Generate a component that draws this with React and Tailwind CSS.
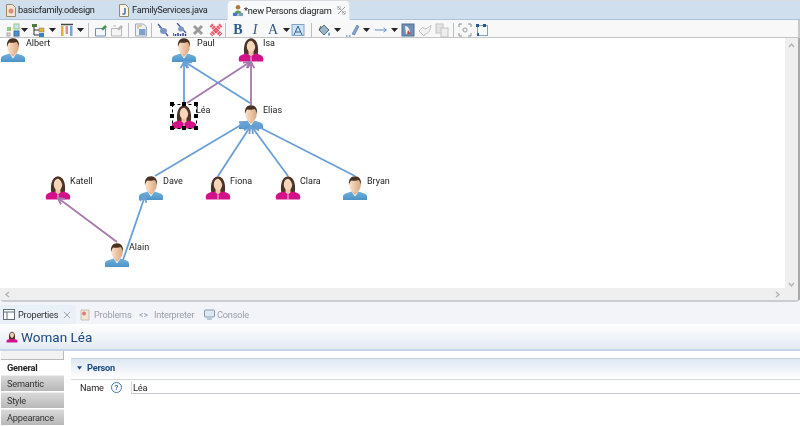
import React from "react";

const font = { fontFamily: 'Roboto,"Noto Sans",sans-serif' };

function Man() {
  return (
    <svg width="26" height="24" viewBox="0 0 26 24" className="block">
      <defs>
        <linearGradient id="skin" x1="0" y1="0" x2="1" y2="0">
          <stop offset="0" stopColor="#fbe3cc" /><stop offset="1" stopColor="#dba67f" />
        </linearGradient>
        <linearGradient id="shirt" x1="0" y1="0" x2="0" y2="1">
          <stop offset="0" stopColor="#6fb2de" /><stop offset="1" stopColor="#4d93c6" />
        </linearGradient>
      </defs>
      <path d="M1 24v-3.500c0-1.600 1-2.600 2.500-3.100L9.500 15.500h7l6 1.900c1.500.5 2.500 1.500 2.500 3.100V24z" fill="url(#shirt)" />
      <path d="M9.500 15.500 13 20.500l3.500-5z" fill="#fff" />
      <path d="M10.500 13h5v3.500l-2.500 2.500-2.500-2.500z" fill="#e5b48f" />
      <ellipse cx="13" cy="8.500" rx="5.800" ry="8" fill="url(#skin)" />
      <path d="M7 9C6.300 3 9 .2 13 .2S19.700 3 19 9c-.5-2.700-1.500-4.300-2.500-5-1.500.8-5 .9-7 .4C8.500 5 7.500 6.500 7 9z" fill="#4a3222" />
    </svg>
  );
}

function Woman() {
  return (
    <svg width="26" height="24" viewBox="0 0 26 24" className="block">
      <path d="M6.500 17.500C5 11 6 .8 13 .2 20 .8 21 11 19.500 17.500z" fill="#4b3327" />
      <path d="M1.200 23.500c-1-2.500-.5-5 1.500-6 2.500-1.200 5-2 7.300-1.500l3 1.500 3-1.500c2.300-.5 4.800.3 7.300 1.500 2 1 2.500 3.500 1.500 6z" fill="#d3128a" />
      <path d="M10.500 12h5v4.500L13 18.500l-2.500-2z" fill="#eec3a3" />
      <ellipse cx="13" cy="8.300" rx="4.200" ry="6" fill="#f6d6bb" />
      <path d="M9 9C8.500 5 10 3 13.500 2.800 15.500 4.500 17 6 17 9l1-4-3-3-4 .2-3 3z" fill="#4b3327" />
      <path d="M13 18.500v5" stroke="#fff" strokeWidth=".8" />
    </svg>
  );
}

function Person({ name, left, top, woman, labelLeft, labelTop }) {
  return (
    <>
      <div className="absolute" style={{ left, top }}>{woman ? <Woman /> : <Man />}</div>
      <div className="absolute text-[9px] leading-[10px] text-[#222]" style={{ left: labelLeft, top: labelTop }}>{name}</div>
    </>
  );
}

const people = [
  ["Albert", 0, 0, false, 26, 0],
  ["Paul", 171, 0, false, 197, 0],
  ["Isa", 238, 0, true, 263, 0],
  ["Léa", 171, 67, true, 196, 67],
  ["Elias", 238, 67, false, 263, 67],
  ["Katell", 45, 138, true, 70, 138],
  ["Dave", 138, 138, false, 163, 138],
  ["Fiona", 205, 138, true, 230, 138],
  ["Clara", 275, 138, true, 300, 138],
  ["Bryan", 342, 138, false, 367, 138],
  ["Alain", 104, 205, false, 129, 204],
];

const edges = [
  ["b", 184, 67, 184, 24],
  ["p", 187, 65, 250, 24],
  ["b", 250, 65, 185, 24],
  ["p", 251, 67, 251, 24],
  ["b", 155, 138, 246, 84],
  ["b", 218, 138, 250, 89],
  ["b", 288, 138, 252, 89],
  ["b", 355, 138, 255, 87],
  ["p", 117, 204, 58, 160],
  ["b", 123, 222, 145, 158],
];

function Edge({ c, x1, y1, x2, y2 }) {
  const col = c === "b" ? "#6a9fd6" : "#a678ab";
  const a = Math.atan2(y2 - y1, x2 - x1);
  const L = 7, W = 0.5;
  const p = (s) => `${x2 - L * Math.cos(a + s * W)},${y2 - L * Math.sin(a + s * W)}`;
  return (
    <g stroke={col} fill="none" strokeWidth="1.800">
      <line x1={x1} y1={y1} x2={x2} y2={y2} />
      <polyline points={`${p(1)} ${x2},${y2} ${p(-1)}`} strokeWidth="1.800" />
    </g>
  );
}

function Selection() {
  const pts = [[0, 0], [12, 0], [24, 0], [0, 12], [24, 12], [0, 24], [12, 24], [24, 24]];
  return (
    <div className="absolute left-[172px] top-[66px] w-[25px] h-[25px] border border-dashed border-black">
      {pts.map(([x, y], i) => (
        <div key={i} className="absolute w-[4px] h-[4px] bg-black" style={{ left: x - 3, top: y - 3 }} />
      ))}
    </div>
  );
}

const Sep = () => <div className="w-px h-[14px] bg-[#b9bec4] shrink-0" />;
const Drop = () => <svg width="7" height="4" viewBox="0 0 7 4" className="shrink-0 block"><path d="M0 0h7L3.500 4z" fill="#222" /></svg>;

function Ico({ children }) {
  return <svg width="14" height="14" viewBox="0 0 14 14" className="block shrink-0">{children}</svg>;
}

const I = {
  grid: <Ico><rect x="1" y="4" width="4" height="4" fill="#8fc97a" /><rect x="8" y="1" width="5" height="5" fill="#cfe0f2" stroke="#8fc97a" /><rect x="1" y="10" width="3" height="3" fill="#d9d9d9" stroke="#aaa" /><rect x="8" y="8" width="5" height="5" fill="#4f8fcf" stroke="#3b6ea5" /></Ico>,
  tree: <Ico><rect x="1" y="1" width="5" height="3" fill="#4d7a3c" /><path d="M3 4v8h5M3 7h5" stroke="#333" fill="none" /><rect x="8" y="5" width="5" height="4" fill="#e2b23a" stroke="#777" strokeWidth=".5" /><rect x="8" y="10" width="5" height="4" fill="#3f7fc4" /></Ico>,
  cols: <Ico><rect x="1" y="3" width="2.500" height="10" fill="#dcae3c" /><rect x="5.500" y="3" width="2.500" height="8" fill="#e59090" /><rect x="10" y="3" width="2.500" height="10" fill="#7aa6d6" /><path d="M1 1.500h12" stroke="#444" strokeWidth="1.500" /></Ico>,
  note: <Ico><path d="M1.500 5.500h10v7.500h-10z" fill="#f4f8fc" stroke="#6f8fae" /><path d="M7 6l4-4 2 2-4 3.500z" fill="#3f9a54" /></Ico>,
  note2: <Ico><path d="M1.500 5.500h10v7.500h-10z" fill="#f5f5f5" stroke="#b7b7b7" /><path d="M7 6l4-4 2 2-4 3.500z" fill="#b5b5b5" /><path d="M3 3h3" stroke="#bbb" /></Ico>,
  page: <Ico><path d="M1.500 1h8l3 3v9h-11z" fill="#eef2f7" stroke="#9aa9bb" /><rect x="5" y="6" width="6.500" height="6" fill="#7ca3cf" /><path d="M3 3h5M3 5h2" stroke="#c6a15e" /></Ico>,
  hide: <Ico><path d="M2 1l10 12" stroke="#3e5f9c" strokeWidth="1.300" /><ellipse cx="7.500" cy="8" rx="3.500" ry="3" fill="#7d96c4" /><path d="M3 4l4 3" stroke="#7d96c4" /></Ico>,
  hideLabel: <Ico><path d="M4 0l9 10" stroke="#3e5f9c" strokeWidth="1.300" /><ellipse cx="8" cy="6" rx="3" ry="2.500" fill="#7d96c4" /><path d="M0 13V10M2.500 13V11M5 13V10M7.500 13V11M10 13V10M12.500 13V11" stroke="#28428a" strokeWidth="1.500" /></Ico>,
  x: <Ico><path d="M3 3l8 8M11 3l-8 8" stroke="#9a9a9a" strokeWidth="3" /></Ico>,
  xRed: <Ico><path d="M2 2l10 10M12 2L2 12" stroke="#ec5a6c" strokeWidth="4" strokeDasharray="2 .6" /></Ico>,
  ab: <Ico><rect x="1" y="1.500" width="12" height="11" fill="#cfe4f5" stroke="#7ea6c8" /><path d="M3 12l4-9 4 9M5 9h4" stroke="#2f5f8f" fill="none" /></Ico>,
  fill: <Ico><path d="M2 7l5-5 5 5-5 5z" fill="#9eb3c7" stroke="#566d83" /><path d="M4 3l-2 4" stroke="#555" /><path d="M12 9c1 1.500 1.500 2.500.5 3.500s-2-.5-1-2z" fill="#4a86c8" /></Ico>,
  pen: <Ico><path d="M6 11l5-9 2 1.500-4.500 8.500z" fill="#7fa3cc" stroke="#4f75a6" strokeWidth=".6" /><path d="M0 13h1.500M3 13h1.500" stroke="#2e5e9e" /></Ico>,
  arrow: <Ico><path d="M1 7h11M9.500 5l3 2-3 2" stroke="#5f93cc" fill="none" /></Ico>,
  img: <Ico><rect x="1" y="1" width="12" height="12" fill="#6f8fb5" stroke="#4f6f94" /><path d="M4 3c3 0 5 3 5 8H5z" fill="#f2f2f2" /><path d="M7 7l3 4H6z" fill="#c9403d" /></Ico>,
  undo: <Ico><path d="M1 8l4-4 1 2c3 0 5-2 7-4-.5 6-3 9-6 9l-1 2z" fill="#f2f2f2" stroke="#c5c5c5" /></Ico>,
  copy: <Ico><rect x="1" y="1" width="7" height="9" fill="#e3e3e3" stroke="#c4c4c4" /><rect x="6" y="5" width="7" height="9" fill="#eee" stroke="#c4c4c4" /></Ico>,
  focus: <Ico><path d="M1 4V1h3M10 1h3v3M13 10v3h-3M4 13H1v-3" stroke="#8c8c8c" fill="none" /><circle cx="7" cy="7" r="2" fill="none" stroke="#9a9a9a" /></Ico>,
  route: <Ico><rect x="2.500" y="2.500" width="10" height="10" fill="#f7f9fc" stroke="#86a0bd" /><rect x="1" y="1" width="3" height="3" fill="#2c5590" /><rect x="8" y="1" width="3" height="3" fill="#2c5590" /><rect x="2" y="10" width="2" height="3" fill="#2c5590" /></Ico>,
};

const serif = { fontFamily: '"Liberation Serif",serif' };

function Toolbar() {
  return (
    <div className="h-[18px] shrink-0 flex items-center pt-[3px] bg-[#f8f8f8] border-b border-[#c4c4c4] border-r-2 border-r-[#c8c8c8]">
      <div className="ml-[6px]">{I.grid}</div>
      <div className="ml-[1px]"><Drop /></div>
      <div className="ml-[3px]">{I.tree}</div>
      <div className="ml-[4px]"><Drop /></div>
      <div className="ml-[4px]">{I.cols}</div>
      <div className="ml-[3px]"><Drop /></div>
      <div className="ml-[4px]"><Sep /></div>
      <div className="ml-[5px]">{I.note}</div>
      <div className="ml-[2px]">{I.note2}</div>
      <div className="ml-[4px]"><Sep /></div>
      <div className="ml-[5px]">{I.page}</div>
      <div className="ml-[3px]"><Sep /></div>
      <div className="ml-[4px]">{I.hide}</div>
      <div className="ml-[3px]">{I.hideLabel}</div>
      <div className="ml-[4px]">{I.x}</div>
      <div className="ml-[4px]">{I.xRed}</div>
      <div className="ml-[2px]"><Sep /></div>
      <div className="ml-[5px] w-[14px] text-center text-[14px] leading-[14px] font-bold text-[#2d5a8c]" style={serif}>B</div>
      <div className="ml-[3px] w-[14px] text-center text-[14px] leading-[14px] italic text-[#2d5a8c]" style={serif}>I</div>
      <div className="ml-[4px] w-[14px] text-center text-[14px] leading-[14px] text-[#2d5a8c]" style={serif}>A</div>
      <div className="ml-[3px]"><Drop /></div>
      <div className="ml-[1px]">{I.ab}</div>
      <div className="ml-[6px]"><Sep /></div>
      <div className="ml-[5px]">{I.fill}</div>
      <div className="ml-[3px]"><Drop /></div>
      <div className="ml-[5px]">{I.pen}</div>
      <div className="ml-[3px]"><Drop /></div>
      <div className="ml-[4px]">{I.arrow}</div>
      <div className="ml-[3px]"><Drop /></div>
      <div className="ml-[3px]">{I.img}</div>
      <div className="ml-[3px]">{I.undo}</div>
      <div className="ml-[3px]">{I.copy}</div>
      <div className="ml-[4px]"><Sep /></div>
      <div className="ml-[4px]">{I.focus}</div>
      <div className="ml-[3px]">{I.route}</div>
    </div>
  );
}

function FileIcon({ letter }) {
  return (
    <svg width="10" height="13" viewBox="0 0 10 13" className="shrink-0">
      <path d="M.5.500h6l3 3v9h-9z" fill={letter ? "#f8f4ea" : "#f4e4d4"} stroke="#9a8a6a" />
      {letter ? <path d="M6 4v5c0 1.500-2 1.500-2.500 .5" fill="none" stroke="#2a5a9a" strokeWidth="1.300" /> : <circle cx="5" cy="7" r="2.500" fill="#e08a7a" />}
    </svg>
  );
}

function TabBar() {
  return (
    <div className="h-[20px] shrink-0 flex bg-[#cfdfee] border-t border-[#d9dde2] border-b border-b-[#aec2d6] pl-[6px] text-[9.200px] tracking-[-0.25px] text-[#222]">
      <div className="w-[113px] flex items-center gap-[2px]"><FileIcon /><span>basicfamily.odesign</span></div>
      <div className="w-[108px] flex items-center gap-[3px]"><FileIcon letter /><span>FamilyServices.java</span></div>
      <div className="w-[123px] flex items-center bg-[#f8f9fb] rounded-t-[4px] pl-[4px] -mb-px border-x border-[#dfe5ec]">
        <svg width="12" height="13" viewBox="0 0 13 13" className="shrink-0"><circle cx="6.500" cy="3" r="2.500" fill="#b0773f" /><path d="M3 10a3.500 3.500 0 0 1 7 0z" fill="#5d9a55" /><rect x="1" y="9" width="5" height="3.500" fill="#4a7ab5" /><rect x="7" y="9" width="5" height="3.500" fill="#7d9cc0" /></svg>
        <span className="whitespace-nowrap w-[87px]">*new Persons diagram</span>
        <svg width="9" height="9" viewBox="0 0 9 9" className="shrink-0 ml-[6px]"><path d="M1 1l7 7M8 1L1 8" stroke="#9a9a9a" strokeWidth="1" /><rect x=".5" y=".5" width="3" height="3" fill="none" stroke="#aaa" strokeWidth=".5" /><rect x="5.500" y="5.500" width="3" height="3" fill="none" stroke="#aaa" strokeWidth=".5" /></svg>
      </div>
    </div>
  );
}

function Canvas() {
  return (
    <div className="relative h-[250px] shrink-0 bg-white overflow-hidden">
      {people.map(([name, l, t, w, ll, lt]) => (
        <Person key={name} name={name} left={l} top={t} woman={w} labelLeft={ll} labelTop={lt} />
      ))}
      <svg width="785" height="250" className="absolute left-0 top-0 pointer-events-none">
        {edges.map(([c, a, b, d, e], i) => <Edge key={i} c={c} x1={a} y1={b} x2={d} y2={e} />)}
      </svg>
      <Selection />
    </div>
  );
}

function Chevron({ d }) {
  return <svg width="7" height="7" viewBox="0 0 7 7" className="block"><path d={d} stroke="#b0b0b0" strokeWidth="1.300" fill="none" /></svg>;
}

function Editor() {
  return (
    <div className="h-[264px] flex border-b-2 border-[#c9ccd2] rounded-b-[4px] bg-[#efefef] shrink-0">
      <div className="flex-1 flex flex-col min-w-0">
        <Canvas />
        <div className="h-[12px] bg-[#efefef] flex items-center justify-between px-[4px]">
          <Chevron d="M5 1L2 3.500 5 6" /><Chevron d="M2 1l3 2.500L2 6" />
        </div>
      </div>
      <div className="w-[13px] bg-[#efefef] flex flex-col items-center justify-between pt-[4px] pb-[12px]">
        <Chevron d="M1 5l2.500-3L6 5" /><Chevron d="M1 2l2.500 3L6 2" />
      </div>
      <div className="w-[2px] bg-[#a9a9a9]" />
    </div>
  );
}

function PanelTabs() {
  return (
    <div className="h-[22px] shrink-0 pt-[3px] flex bg-[#f3f4fa] text-[9.200px] tracking-[-0.2px] text-[#9a9fa8]">
      <div className="w-[76px] bg-[#eaf0f7] rounded-t-[4px] flex items-center pl-[3px] text-[#333]">
        <svg width="12" height="11" viewBox="0 0 12 11" className="shrink-0"><rect x=".5" y=".5" width="11" height="10" fill="#fff" stroke="#5f6f80" /><path d="M.5 3h11M4 3v7" stroke="#5f6f80" /></svg>
        <span className="ml-[3px] w-[42px]">Properties</span>
        <svg width="8" height="8" viewBox="0 0 9 9" className="shrink-0 ml-[3px]"><path d="M1 1l7 7M8 1L1 8" stroke="#9a9a9a" /></svg>
      </div>
      <div className="flex items-center ml-[3px]">
        <svg width="12" height="12" viewBox="0 0 12 12"><path d="M2 1h8v10H2z" fill="#efe6d8" stroke="#c8bfae" /><circle cx="5" cy="4.500" r="2" fill="#e07a7a" /></svg>
        <span className="ml-[3px] w-[37px]">Problems</span>
      </div>
      <div className="flex items-center">
        <span className="ml-[8px] w-[11px] text-[#8ca0b5]">&lt;&gt;</span>
        <span className="ml-[4px] w-[40px]">Interpreter</span>
      </div>
      <div className="flex items-center ml-[10px]">
        <svg width="11" height="11" viewBox="0 0 11 11"><rect x=".5" y="1" width="10" height="7" rx="1" fill="#dfe8f2" stroke="#7f9ab5" /><path d="M3 10h5" stroke="#7f9ab5" /></svg>
        <span className="ml-[2px]">Console</span>
      </div>
    </div>
  );
}

function SideTab({ children, active }) {
  return active
    ? <div className="h-[15px] bg-white pl-[7px] flex items-center font-bold text-[#222]">{children}</div>
    : <div className="h-[16px] mb-px ml-[1px] w-[63px] pl-[6px] flex items-center bg-gradient-to-b from-[#d9d9d9] to-[#b8b8b8] border-t border-[#eee] text-[#333]">{children}</div>;
}

function Properties() {
  return (
    <div className="flex-1 flex flex-col min-h-0 overflow-hidden">
      <PanelTabs />
      <div className="h-[27px] shrink-0 flex items-center pl-[6px] pt-[1px] gap-[3px] bg-gradient-to-b from-white to-[#e3ebf3] border-b-2 border-[#c5d6e6] text-[13.500px] text-[#1b4a80]">
        <div className="w-[12px] h-[13px] overflow-hidden"><svg width="12" height="13" viewBox="0 0 26 26" className="block"><path d="M7 17C5.500 11 6.500 1 13 .5 19.500 1 20.500 11 19 17z" fill="#4b3327" /><path d="M1.500 24c-1-2.500-.5-5 1.500-6 2.500-1.200 5-2 7-1.500h6c2-.5 4.500.3 7 1.500 2 1 2.500 3.500 1.500 6z" fill="#d3128a" /><ellipse cx="13" cy="8.300" rx="4.200" ry="6" fill="#f3cfb1" /></svg></div>
        <span>Woman Léa</span>
      </div>
      <div className="flex-1 flex min-h-0 bg-white text-[9.200px] tracking-[-0.2px]">
        <div className="w-[64px] shrink-0 flex flex-col">
          <div className="h-[9px] shrink-0 w-[63px] ml-[1px] bg-[#f2f2f2] border-b border-r border-[#b9b9b9]" />
          <SideTab active>General</SideTab>
          <SideTab>Semantic</SideTab>
          <SideTab>Style</SideTab>
          <SideTab>Appearance</SideTab>
        </div>
        <div className="flex-1 min-w-0 ml-[7px] pt-[7px]">
          <div className="h-[22px] flex items-center pl-[6px] pb-[3px] gap-[5px] bg-gradient-to-b from-[#dfe8f3] to-white border-t border-[#c5d3e0] border-b border-b-[#d8d8d8] text-[#1b4a80] font-bold">
            <svg width="5" height="4" viewBox="0 0 6 4"><path d="M0 0h6L3 4z" fill="#1b4a80" /></svg>
            <span>Person</span>
          </div>
          <div className="flex items-center mt-px text-[#222]">
            <span className="ml-[9px] w-[31px]">Name</span>
            <span className="w-[11px] h-[11px] rounded-full border border-[#3f74ad] text-[#3f74ad] text-[8px] leading-[9px] text-center font-bold">?</span>
            <div className="ml-[9px] flex-1 h-[13px] border-b border-b-[#c3ccd6] border-l border-l-[#d9d9d9] flex items-center pl-px">Léa</div>
          </div>
        </div>
      </div>
    </div>
  );
}

export default function App() {
  return (
    <div className="w-[800px] h-[426px] flex flex-col overflow-hidden bg-white blur-[0.35px]" style={font}>
      <TabBar />
      <Toolbar />
      <Editor />
      <Properties />
    </div>
  );
}
